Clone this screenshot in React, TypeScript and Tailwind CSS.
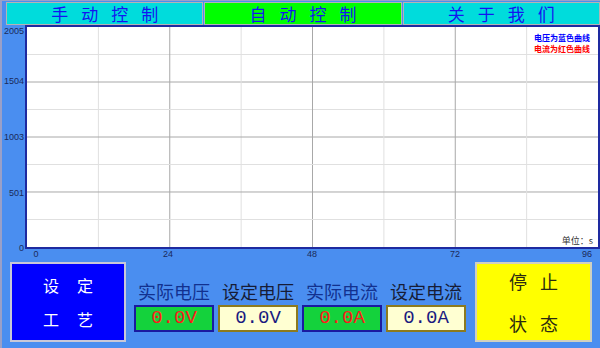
const cjk = "font-['Noto_Sans_CJK_SC','Noto_Sans',sans-serif]";
const axis = "font-['Liberation_Sans',Arial,sans-serif] text-[9px] leading-[10px] text-[#1a2a5a]";

const tabs = [
	{ label: "手动控制", bg: "bg-[#00dcdc]" },
	{ label: "自动控制", bg: "bg-[#00ff00]" },
	{ label: "关于我们", bg: "bg-[#00dcdc]" },
];

const yTicks = [
	{ label: "2005", top: "top-[1px]" },
	{ label: "1504", top: "top-[51px]" },
	{ label: "1003", top: "top-[107px]" },
	{ label: "501", top: "top-[163px]" },
	{ label: "0", top: "top-[218px]" },
];

const xTicks = [
	{ label: "0", left: "left-[34px]" },
	{ label: "24", left: "left-[166px]" },
	{ label: "48", left: "left-[310px]" },
	{ label: "72", left: "left-[453px]" },
	{ label: "96", left: "left-[585px]" },
];

const readings = [
	{ label: "实际电压", value: "0.0V", actual: true },
	{ label: "设定电压", value: "0.0V", actual: false },
	{ label: "实际电流", value: "0.0A", actual: true },
	{ label: "设定电流", value: "0.0A", actual: false },
];

function Grid() {
	const lines = [1, 2, 3, 4, 5, 6, 7];
	return (
		<svg
			className="absolute inset-0 w-full h-full"
			viewBox="0 0 8 8"
			preserveAspectRatio="none"
		>
			{lines.map((i) => (
				<g key={i}>
					<line
						x1={i}
						y1={0}
						x2={i}
						y2={8}
						stroke={i % 2 === 0 ? "#a8a8a8" : "#e0e0e0"}
						strokeWidth={1}
						vectorEffect="non-scaling-stroke"
					/>
					<line
						x1={0}
						y1={i}
						x2={8}
						y2={i}
						stroke={i % 2 === 0 ? "#a8a8a8" : "#e0e0e0"}
						strokeWidth={1}
						vectorEffect="non-scaling-stroke"
					/>
				</g>
			))}
		</svg>
	);
}

export default function App() {
	return (
		<div className="w-[600px] h-[348px] bg-[#4a8ef0] border-l-2 border-t border-[#9aa0c8] flex flex-col overflow-hidden">
			{/* Tabs */}
			<div className="flex h-[24px] pl-[4px] pt-[1px] gap-[1px]">
				{tabs.map((t) => (
					<div
						key={t.label}
						className={`flex-1 ${t.bg} border border-[#b4b4b4] flex items-center justify-center ${cjk} text-[17px] leading-none text-[#1414f0] tracking-[13px] pl-[13px]`}
					>
						{t.label}
					</div>
				))}
			</div>

			{/* Chart */}
			<div className="flex h-[224px]">
				<div className="relative w-[23px]">
					{yTicks.map((t) => (
						<span key={t.label} className={`absolute right-[1px] ${t.top} ${axis}`}>
							{t.label}
						</span>
					))}
				</div>
				<div className="relative flex-1 bg-white border-2 border-[#1e2aa0]">
					<Grid />
					<div className={`absolute right-[8px] top-[5px] ${cjk} text-[8px] leading-[11px] font-bold`}>
						<div className="text-[#0000ff]">电压为蓝色曲线</div>
						<div className="text-[#ff0000]">电流为红色曲线</div>
					</div>
					<div className={`absolute right-[5px] bottom-[1px] ${cjk} text-[9px] leading-[11px] text-[#333333]`}>
						单位：s
					</div>
				</div>
			</div>

			{/* X axis labels */}
			<div className="relative h-[10px]">
				{xTicks.map((t) => (
					<span key={t.label} className={`absolute top-0 ${t.left} -translate-x-1/2 ${axis}`}>
						{t.label}
					</span>
				))}
			</div>

			{/* Bottom panel */}
			<div className="flex pt-[3px] pl-[8px]">
				<div className={`w-[116px] h-[80px] bg-[#0000ff] border-2 border-[#c8c8d8] flex flex-col items-center justify-center gap-[18px] ${cjk} text-[16px] leading-none text-white`}>
					<span className="tracking-[18px] pl-[18px]">设定</span>
					<span className="tracking-[18px] pl-[18px]">工艺</span>
				</div>

				<div className="flex items-end gap-[4px] ml-[8px] pb-[10px]">
					{readings.map((r) => (
						<div key={r.label} className="flex flex-col items-center w-[80px]">
							<span
								className={`${cjk} text-[18px] leading-[22px] mb-[3px] ${
									r.actual ? "text-[#12318f]" : "text-[#161c36]"
								}`}
							>
								{r.label}
							</span>
							<div
								className={`w-[80px] h-[27px] border-2 flex items-center justify-center font-['Liberation_Mono','Courier_New',monospace] text-[19px] leading-none ${
									r.actual
										? "bg-[#14d23c] border-[#1a1aa0] text-[#ff1a1a]"
										: "bg-[#ffffd2] border-[#8c7a1e] text-[#1a1a80]"
								}`}
							>
								{r.value}
							</div>
						</div>
					))}
				</div>

				<div className={`w-[117px] h-[80px] ml-[9px] bg-[#ffff00] border-2 border-[#d0d0c0] flex flex-col items-center justify-center gap-[24px] ${cjk} text-[18px] leading-none text-[#2a2a10]`}>
					<span className="tracking-[13px] pl-[13px]">停止</span>
					<span className="tracking-[13px] pl-[13px]">状态</span>
				</div>
			</div>
		</div>
	);
}
